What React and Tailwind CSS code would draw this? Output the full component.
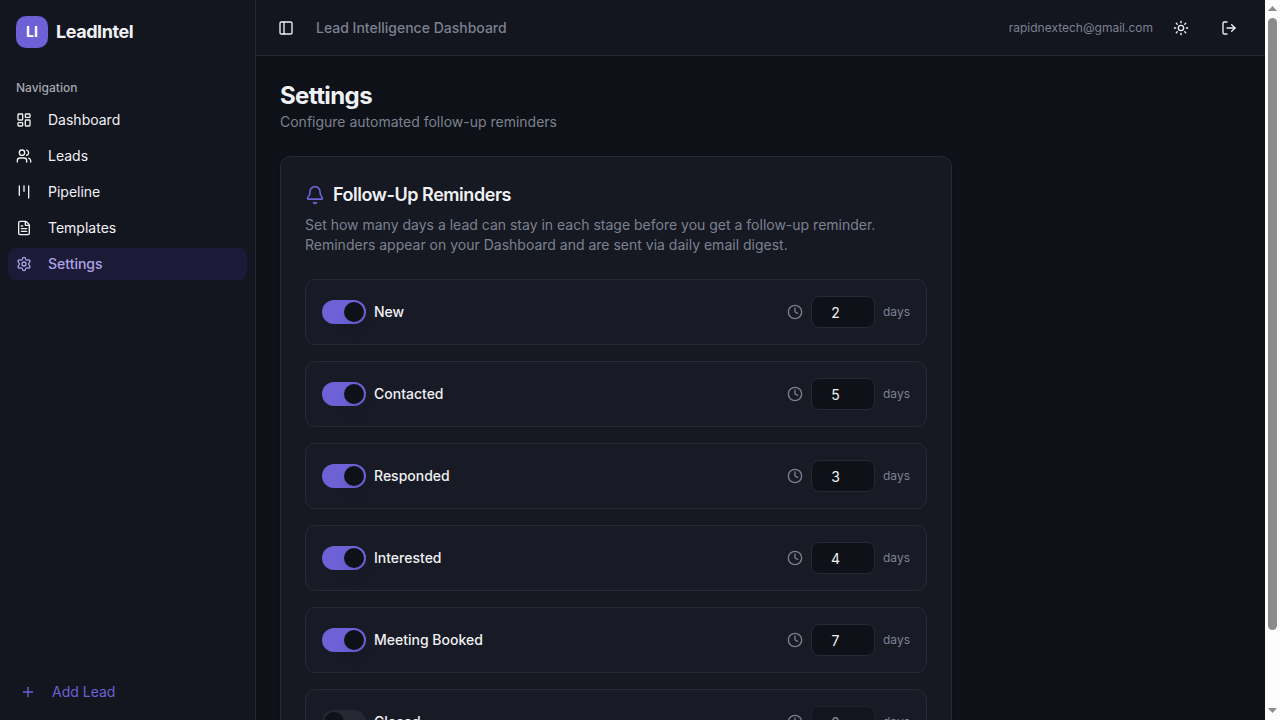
import { useState } from 'react';
import * as Switch from '@radix-ui/react-switch';
import {
  Bell,
  Clock,
  FileText,
  Kanban,
  LayoutDashboard,
  LogOut,
  PanelLeft,
  Plus,
  Settings,
  Sun,
  Users,
} from 'lucide-react';

const navItems = [
  { title: 'Dashboard', href: '#dashboard', icon: LayoutDashboard },
  { title: 'Leads', href: '#leads', icon: Users },
  { title: 'Pipeline', href: '#pipeline', icon: Kanban },
  { title: 'Templates', href: '#templates', icon: FileText },
  { title: 'Settings', href: '#settings', icon: Settings, active: true },
];

const initialRules = [
  { id: 'new', stage: 'New', days: 2, enabled: true },
  { id: 'contacted', stage: 'Contacted', days: 5, enabled: true },
  { id: 'responded', stage: 'Responded', days: 3, enabled: true },
  { id: 'interested', stage: 'Interested', days: 4, enabled: true },
  { id: 'meeting-booked', stage: 'Meeting Booked', days: 7, enabled: true },
  { id: 'closed', stage: 'Closed', days: 0, enabled: false },
];

function AppSidebar() {
  return (
    <aside className="sticky top-0 flex h-screen w-64 shrink-0 flex-col border-r border-[#262833] bg-[#13151f]">
      <div className="flex items-center gap-2 p-4">
        <div className="flex size-8 items-center justify-center rounded-[10px] bg-[#6c62d5] text-sm font-bold text-white">
          LI
        </div>
        <span className="text-lg font-bold tracking-tight text-[#f0f1f4]">LeadIntel</span>
      </div>

      <nav className="flex-1 p-2">
        <div className="flex h-8 items-center px-2 text-xs font-medium text-[#a5a7ae]">Navigation</div>
        <ul className="flex flex-col gap-1">
          {navItems.map((item) => (
            <li key={item.title}>
              <a
                href={item.href}
                className={
                  item.active
                    ? 'flex h-8 items-center gap-4 rounded-lg bg-[#1c1b37] px-2 text-sm font-medium text-[#aea3e6]'
                    : 'flex h-8 items-center gap-4 rounded-lg px-2 text-sm text-[#f0f1f4] hover:bg-[#1c1b37]'
                }
              >
                <item.icon className="size-4 shrink-0" />
                <span>{item.title}</span>
              </a>
            </li>
          ))}
        </ul>
      </nav>

      <div className="p-3">
        <a href="#new-lead" className="flex h-8 items-center gap-4 rounded-lg px-2 text-sm text-[#6c62d5]">
          <Plus className="size-4 shrink-0" />
          <span>Add Lead</span>
        </a>
      </div>
    </aside>
  );
}

function Header() {
  return (
    <header className="sticky top-0 z-10 flex h-14 items-center gap-4 border-b border-[#262833] bg-[#13151f] px-4">
      <button aria-label="Toggle Sidebar" className="flex size-7 items-center justify-center rounded-lg text-[#f0f1f4]">
        <PanelLeft className="size-4" />
      </button>
      <span className="text-sm font-medium text-[#7c8190]">Lead Intelligence Dashboard</span>
      <div className="ml-auto flex items-center gap-2">
        <span className="text-xs text-[#7c8190]">rapidnextech@gmail.com</span>
        <button aria-label="Toggle theme" className="flex size-10 items-center justify-center rounded-lg text-[#f0f1f4]">
          <Sun className="size-4" />
        </button>
        <button aria-label="Sign out" className="flex size-10 items-center justify-center rounded-lg text-[#f0f1f4]">
          <LogOut className="size-4" />
        </button>
      </div>
    </header>
  );
}

function ReminderRow({ rule, onChange }) {
  return (
    <div className="flex items-center justify-between rounded-[10px] border border-[#262833] bg-[#181a25] p-4">
      <div className="flex items-center gap-2">
        <Switch.Root
          id={rule.id}
          checked={rule.enabled}
          onCheckedChange={(enabled) => onChange({ ...rule, enabled })}
          className="inline-flex h-6 w-11 shrink-0 items-center rounded-full border-2 border-transparent transition-colors data-[state=checked]:bg-[#6c62d5] data-[state=unchecked]:bg-[#262833]"
        >
          <Switch.Thumb className="block size-5 rounded-full bg-[#0e1117] shadow-lg data-[state=checked]:translate-x-5 data-[state=unchecked]:translate-x-0" />
        </Switch.Root>
        <label htmlFor={rule.id} className="text-sm font-medium text-[#f0f1f4]">
          {rule.stage}
        </label>
      </div>
      <div className="flex items-center gap-2">
        <Clock className="size-4 text-[#7c8190]" />
        <input
          id={`${rule.id}-days`}
          type="number"
          min={0}
          value={rule.days}
          disabled={!rule.enabled}
          onChange={(e) => onChange({ ...rule, days: Number(e.target.value) })}
          className="h-8 w-16 rounded-lg border border-[#262833] bg-[#0e1117] px-3 py-2 text-center text-sm text-[#f0f1f4] disabled:opacity-50"
        />
        <label htmlFor={`${rule.id}-days`} className="text-xs text-[#7c8190]">
          days
        </label>
      </div>
    </div>
  );
}

function ScrollRail() {
  return (
    <div aria-hidden="true" className="sticky top-0 flex h-screen w-[15px] shrink-0 flex-col items-center bg-[#fcfcfc]">
      <div className="flex h-[18px] shrink-0 justify-center pt-1.5">
        <svg width="9" height="5" viewBox="0 0 9 5" fill="#8b8b8b">
          <path d="M4.5 0 9 5H0z" />
        </svg>
      </div>
      <div className="h-[85%] w-[9px] rounded-full bg-[#8b8b8b]" />
      <svg width="9" height="5" viewBox="0 0 9 5" fill="#8b8b8b" className="mt-auto mb-[7px]">
        <path d="M0 0h9L4.5 5z" />
      </svg>
    </div>
  );
}

export default function App() {
  const [rules, setRules] = useState(initialRules);

  const updateRule = (next) => {
    setRules(rules.map((rule) => (rule.id === next.id ? next : rule)));
  };

  return (
    <div className="flex min-h-screen w-full bg-[#0e1117] font-['Inter',sans-serif] text-[#f0f1f4] antialiased">
      <AppSidebar />
      <div className="flex min-w-0 flex-1 flex-col">
        <Header />
        <main className="flex-1 p-6">
          <div className="max-w-2xl space-y-6">
            <div>
              <h1 className="text-2xl font-bold tracking-tight">Settings</h1>
              <p className="text-sm text-[#7c8190]">Configure automated follow-up reminders</p>
            </div>

            {/* Reminder rules */}
            <section className="rounded-[10px] border border-[#262833] bg-[#161822] p-6 shadow-sm">
              <h2 className="flex items-center gap-2 text-lg font-semibold tracking-tight">
                <Bell className="size-5 text-[#6c62d5]" />
                Follow-Up Reminders
              </h2>
              <p className="mt-1.5 text-sm text-[#7c8190]">
                Set how many days a lead can stay in each stage before you get a follow-up reminder. Reminders appear on
                your Dashboard and are sent via daily email digest.
              </p>
              <div className="mt-6 space-y-4">
                {rules.map((rule) => (
                  <ReminderRow key={rule.id} rule={rule} onChange={updateRule} />
                ))}
              </div>
            </section>
          </div>
        </main>
      </div>
      <ScrollRail />
    </div>
  );
}
